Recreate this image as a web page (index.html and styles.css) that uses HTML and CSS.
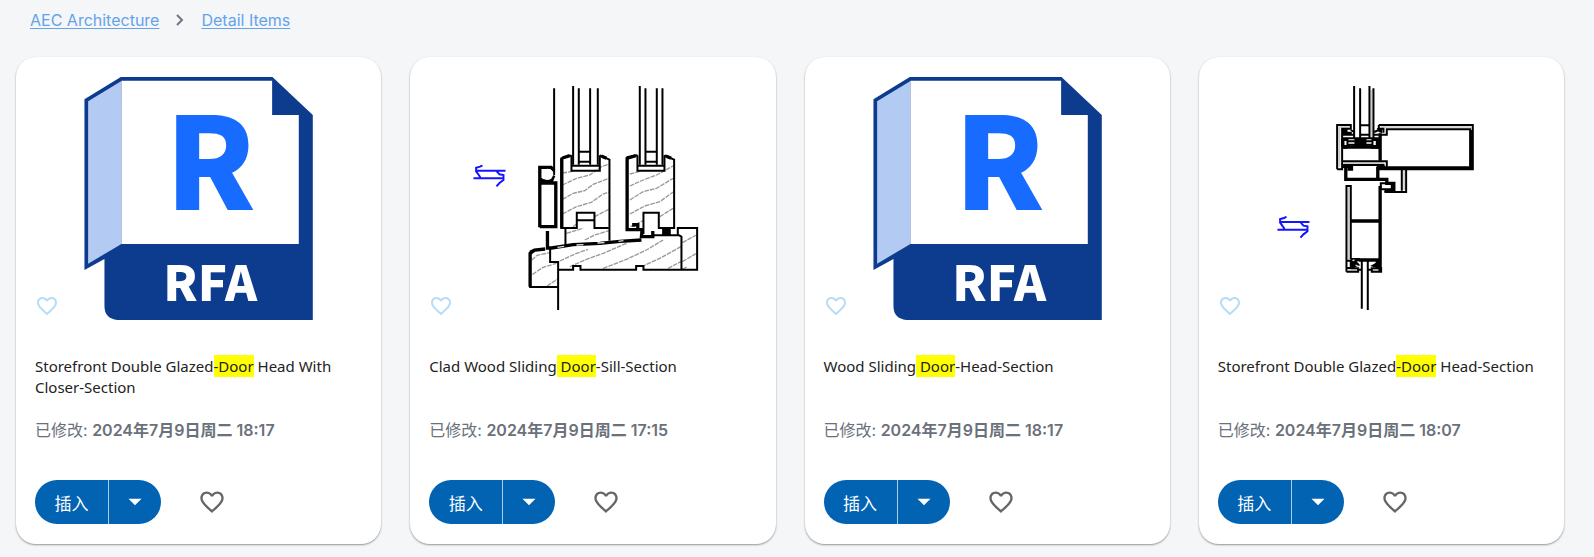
FILE: index.html
```html
<!DOCTYPE html>
<html lang="zh-CN">
<head>
<meta charset="utf-8">
<title>Detail Items</title>
<link rel="stylesheet" href="styles.css">
</head>
<body>
<svg class="defs" aria-hidden="true">
  <symbol id="heart" viewBox="0 0 24 24"><path d="M16.5 3c-1.74 0-3.41.81-4.5 2.09C10.91 3.81 9.24 3 7.5 3 4.42 3 2 5.42 2 8.5c0 3.78 3.4 6.86 8.55 11.54L12 21.35l1.45-1.32C18.6 15.36 22 12.28 22 8.5 22 5.42 19.58 3 16.5 3zm-4.4 15.55l-.1.1-.1-.1C7.14 14.24 4 11.39 4 8.5 4 6.5 5.5 5 7.5 5c1.54 0 3.04.99 3.57 2.36h1.87C13.46 5.99 14.96 5 16.5 5c2 0 3.5 1.5 3.5 3.5 0 2.89-3.14 5.74-7.9 10.05z"/></symbol>
  <symbol id="caret" viewBox="0 0 24 24"><path d="M6 9l6 6 6-6z"/></symbol>
  <symbol id="swap" viewBox="0 0 100 70">
    <path class="swap-line" d="M9 18H98M2 41H92M29 2L22 6L10 9V20L18 31L23 39M72 20L80 29L92 31V46L80 55L71 65"/>
  </symbol>
</svg>

<nav class="crumbs" aria-label="Breadcrumb">
  <a href="#">AEC Architecture</a>
  <svg class="chevron" viewBox="0 0 12 16" aria-hidden="true"><path d="M3 3l5 5-5 5"/></svg>
  <a href="#">Detail Items</a>
</nav>

<main class="grid">
  <article class="card">
    <div class="thumb">
      <svg class="picture" viewBox="0 0 1095 810" role="img" aria-label="RFA">
        <g transform="translate(132 9)">
          <path fill="#0d3c8f" d="M182 51H637L758 165V780H172Q133 776 133 738V597L73 630V118Z"/>
          <path fill="#b3cbf3" d="M84 124L184 63V552L84 611Z"/>
          <path fill="#fff" d="M184 62H636V165H716V552H184Z"/>
          <text class="logo-letter" x="315" y="450">R</text>
          <text class="logo-type" x="450" y="724">RFA</text>
        </g>
      </svg>
      <button class="pin" aria-label="收藏"><svg><use href="#heart"/></svg></button>
    </div>
    <h2 class="title">Storefront Double Glazed<mark>-Door</mark> Head With Closer-Section</h2>
    <p class="date">已修改: <b>2024年7月9日周二 18:17</b></p>
    <div class="actions">
      <div class="split"><button class="insert">插入</button><button class="more" aria-label="更多"><svg><use href="#caret"/></svg></button></div>
      <button class="like" aria-label="喜欢"><svg><use href="#heart"/></svg></button>
    </div>
  </article>

  <article class="card">
    <div class="thumb">
      <svg class="picture" viewBox="0 0 1095 810" role="img" aria-label="Sill section">
        <g transform="translate(149 39)">
          <use href="#swap" x="39" y="284" width="100" height="70"/>
          <g class="grain">
            <path d="M308 309L340 304M308 388L340 370L375 362L400 343L447 325M308 345L350 325L390 315L425 290L447 283M308 432L350 410L395 397L430 372L447 366M320 490L370 475M375 510L405 495L447 482M404 440L447 418M340 470L350 462"/>
            <path d="M510 312L545 303M510 348L550 330L590 315L640 288M510 390L550 365L590 355L640 325M510 432L555 408L600 395L640 366M512 470L550 452M600 440L640 415"/>
            <path d="M216 570L232 556L270 548M218 613L250 592L290 580M262 648L292 628M300 573L350 550L385 538M330 590L380 568L430 550L500 520M430 595L500 568L560 540L610 510M545 590L600 565L663 530M625 595L663 575M668 518L710 495M668 575L710 550M668 598L682 590"/>
          </g>
          <g class="ink">
            <path d="M283 55V315M340 48V284M357 55V284M391 55V284M414 55V284M540 48V284M557 55V284M591 55V284M608 55V284M357 245H391M357 275H391M557 245H591M557 275H591"/>
            <path d="M335 287H420V302H335ZM533 287H614V302H533ZM335 256V300M420 256V300M533 256V300M614 256V300"/>
            <path d="M305 476V265L335 256M420 256L449 269V512M500 262L533 256M614 256L643 269V474H597V428H551V492"/>
            <path d="M305 474H317V525M317 474H351V428H404V474H447M351 451H404"/>
            <path d="M210 545L225 538M208 651H295M271 535V576H295V720M295 599H340V588H362V599H529V588H551V599H712V474H654V496H580M665 498V599M654 494L665 500"/>
          </g>
          <g class="heavy">
            <path d="M306 265V476M308 264L330 257M502 262V479H547L545 500H579V483M505 264L528 257M522 470V464H534V474M424 258L440 265M618 258L634 265"/>
            <path d="M240 472V339H288V470H240M240 335V292H274L283 302M239 326L250 333H275L282 316M211 650V550L225 540L256 537M263 483V534H275L340 524L420 520L480 514L545 510"/>
          </g>
          <circle class="hole" cx="263" cy="313" r="17"/>
          <path class="gaps" d="M293 532L313 529M350 525L371 524M413 519L434 518M476 514L491 512"/>
          <path d="M607 474H633V497H607Z"/>
        </g>
      </svg>
      <button class="pin" aria-label="收藏"><svg><use href="#heart"/></svg></button>
    </div>
    <h2 class="title">Clad Wood Sliding<mark> Door</mark>-Sill-Section</h2>
    <p class="date">已修改: <b>2024年7月9日周二 17:15</b></p>
    <div class="actions">
      <div class="split"><button class="insert">插入</button><button class="more" aria-label="更多"><svg><use href="#caret"/></svg></button></div>
      <button class="like" aria-label="喜欢"><svg><use href="#heart"/></svg></button>
    </div>
  </article>

  <article class="card">
    <div class="thumb">
      <svg class="picture" viewBox="0 0 1095 810" role="img" aria-label="RFA">
        <g transform="translate(132 9)">
          <path fill="#0d3c8f" d="M182 51H637L758 165V780H172Q133 776 133 738V597L73 630V118Z"/>
          <path fill="#b3cbf3" d="M84 124L184 63V552L84 611Z"/>
          <path fill="#fff" d="M184 62H636V165H716V552H184Z"/>
          <text class="logo-letter" x="315" y="450">R</text>
          <text class="logo-type" x="450" y="724">RFA</text>
        </g>
      </svg>
      <button class="pin" aria-label="收藏"><svg><use href="#heart"/></svg></button>
    </div>
    <h2 class="title">Wood Sliding<mark> Door</mark>-Head-Section</h2>
    <p class="date">已修改: <b>2024年7月9日周二 18:17</b></p>
    <div class="actions">
      <div class="split"><button class="insert">插入</button><button class="more" aria-label="更多"><svg><use href="#caret"/></svg></button></div>
      <button class="like" aria-label="喜欢"><svg><use href="#heart"/></svg></button>
    </div>
  </article>

  <article class="card">
    <div class="thumb">
      <svg class="picture" viewBox="0 0 1095 810" role="img" aria-label="Head section">
        <g transform="translate(183 39)">
          <use href="#swap" x="50" y="438" width="100" height="70"/>
          <g class="grey"><path d="M238 172V290M238 171H266M362 171H634M252 280H372M265 353V568M432 302V360M264 600H290M338 600H358M334 60V200"/></g>
          <g class="ink">
            <path d="M282 48V205M300 55V205M328 48V205M340 55V205M300 166H328M300 194H328"/>
            <path d="M231 298V165H272V176H246V298H231M356 165H638V298H356M356 165V176H370V188M380 194V178H630V290M356 194H380V180"/>
            <path d="M246 274H380V294M246 285H370V294H380M246 194H282M340 194H356M246 205H356M272 180L282 186M356 180L342 186"/>
            <path d="M259 605V348H272V568M425 300V362M438 298V366H373M362 340H395V358H362ZM259 572H272V594H259M259 605H294V595H272M335 595H363V605H335ZM294 599H305M324 599H335M305 572V716M323 572V720"/>
            <path d="M248 210H262V228H248ZM337 210H350V228H337ZM264 214H337M264 224H337M286 210H316V227H286ZM286 218H316"/>
          </g>
          <g class="heavy">
            <path d="M246 183H262M246 190H275M246 231H356M360 190V272M358 294H634V180M257 292V328H380V340H401V362H373M353 290V328M360 348V605M272 453H360M272 570H358M248 206V232M353 206V232"/>
          </g>
          <path d="M246 285H279V302H262V294H246ZM350 285H373V300H350ZM246 228H262V236H246ZM332 228H356V236H332ZM345 568H362V594H350L330 588L345 580ZM272 564H300V574H290L300 586L280 594H272ZM246 176L262 182L246 192ZM350 174H366V190L356 186Z"/>
          <path class="gaps" d="M277 572L283 570M292 576H297M342 577H347M286 585L296 590"/>
        </g>
      </svg>
      <button class="pin" aria-label="收藏"><svg><use href="#heart"/></svg></button>
    </div>
    <h2 class="title">Storefront Double Glazed<mark>-Door</mark> Head-Section</h2>
    <p class="date">已修改: <b>2024年7月9日周二 18:07</b></p>
    <div class="actions">
      <div class="split"><button class="insert">插入</button><button class="more" aria-label="更多"><svg><use href="#caret"/></svg></button></div>
      <button class="like" aria-label="喜欢"><svg><use href="#heart"/></svg></button>
    </div>
  </article>
</main>
</body>
</html>
```
FILE: styles.css
```css
* { box-sizing: border-box; }

body {
  margin: 0;
  background: #f5f6f8;
  color: #222;
  font-family: "Noto Sans", "Noto Sans CJK SC", sans-serif;
}

button {
  margin: 0;
  padding: 0;
  border: 0;
  background: none;
  font: inherit;
  cursor: pointer;
}

.defs { position: absolute; width: 0; height: 0; }

.crumbs {
  display: flex;
  align-items: center;
  gap: 15px;
  height: 39px;
  padding-left: 30px;
  font: 16px/24px Inter, sans-serif;
}

.crumbs a { color: #64a3ea; text-underline-offset: 2px; }

.chevron {
  width: 12px;
  height: 16px;
  fill: none;
  stroke: #6f7682;
  stroke-width: 2;
}

.grid {
  display: grid;
  grid-template-columns: repeat(4, 1fr);
  gap: 29px;
  padding: 18px 30px 13px 16px;
}

.card {
  display: flex;
  flex-direction: column;
  padding: 0 19px 20px;
  border-radius: 20px;
  background: #fff;
  box-shadow: 0 1px 2px rgba(0, 0, 0, .4);
}

.thumb {
  position: relative;
  height: 270px;
  margin: 0 -19px;
}

.picture { display: block; width: 100%; height: 100%; }

.pin {
  position: absolute;
  left: 19px;
  bottom: 9px;
  width: 24px;
  height: 24px;
}

.pin svg, .like svg, .more svg { display: block; width: 100%; height: 100%; }
.pin svg { fill: #b5dcf8; }

.title {
  min-height: 42px;
  margin: 29px 0 0;
  font-size: 15px;
  font-weight: 400;
  line-height: 21px;
}

.title mark {
  padding: 1px 0;
  background: #ff0;
  color: inherit;
}

.date {
  margin: 20px 0 0;
  color: #6b717b;
  font: 16px/24px Inter, "Noto Sans CJK SC", sans-serif;
}

.date b { font-weight: 600; }

.actions {
  display: flex;
  align-items: center;
  gap: 37px;
  margin-top: 38px;
}

.split {
  display: flex;
  height: 44px;
  overflow: hidden;
  border-radius: 22px;
  background: #0263b3;
}

.insert {
  width: 73px;
  color: #fff;
  font-size: 17px;
}

.more {
  width: 53px;
  padding: 8px 13px;
  border-left: 1px solid #a9cbe6;
}

.more svg { fill: #fff; }

.like { width: 28px; height: 28px; }
.like svg { fill: #666; }

.logo-letter, .logo-type {
  font-family: "Noto Sans CJK SC", sans-serif;
  font-weight: 900;
}

.logo-letter { font-size: 384px; fill: #186bff; }
.logo-type { font-size: 146px; fill: #fff; text-anchor: middle; }

.swap-line { fill: none; stroke: #1414ff; stroke-width: 6; }
.grain { fill: none; stroke: #999; stroke-width: 4; stroke-dasharray: 14 3; }
.ink { fill: none; stroke: #000; stroke-width: 6; }
.grey { fill: none; stroke: #ccc; stroke-width: 5; }
.heavy { fill: none; stroke: #000; stroke-width: 10; }
.hole { fill: #fff; }
.gaps { fill: none; stroke: #ddd; stroke-width: 4; }
```
